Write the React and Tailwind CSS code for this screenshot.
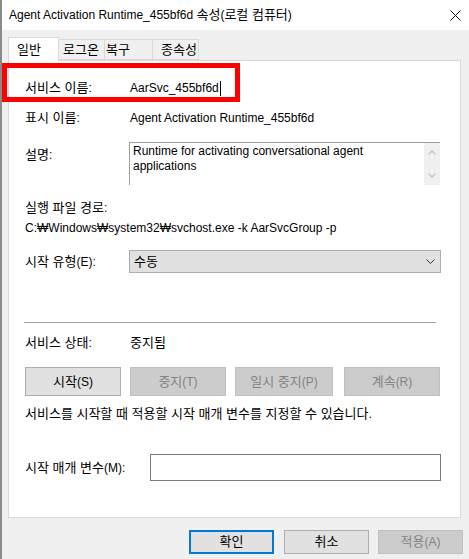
const FONT = { fontFamily: '"Liberation Sans", "Noto Sans CJK KR", sans-serif' };

// Hangul in Noto CJK runs ~8% narrower than Malgun Gothic, so bump those runs up a pixel
function K({ children }) {
  const parts = String(children).split(/([\uAC00-\uD7A3]+(?: [\uAC00-\uD7A3]+)*)/);
  return parts.map((p, i) =>
    /[\uAC00-\uD7A3]/.test(p) ? (
      <span key={i} className="text-[13px]">
        {p}
      </span>
    ) : (
      p
    )
  );
}

function Btn({ children, disabled, className = '' }) {
  return (
    <div
      className={`flex items-center justify-center border ${
        disabled ? 'border-[#bfbfbf] bg-[#cccccc] text-[#838383]' : 'border-[#adadad] bg-[#e1e1e1] text-black'
      } ${className}`}
    >
      <span>
        <K>{children}</K>
      </span>
    </div>
  );
}

function Row({ label, children, className = '' }) {
  return (
    <div className={`flex h-[20px] items-center ${className}`}>
      <div className="w-[105px] shrink-0">
        <K>{label}</K>
      </div>
      {children}
    </div>
  );
}

export default function App() {
  return (
    <div
      className="relative h-[559px] w-[469px] overflow-hidden border-l-2 border-[#8a8a8a] bg-[#f0f0f0] text-[12px] leading-[16px] text-black"
      style={FONT}
    >
      {/* title bar */}
      <div className="flex h-[30px] items-center justify-between bg-white pl-[7px] pr-[8px]">
        <span>
          <K>Agent Activation Runtime_455bf6d 속성(로컬 컴퓨터)</K>
        </span>
        <svg width="11" height="11" viewBox="0 0 11 11">
          <path d="M0.5 0.5L10.5 10.5M10.5 0.5L0.5 10.5" stroke="#111" strokeWidth="1" />
        </svg>
      </div>

      {/* tabs */}
      <div className="flex h-[30px] items-end pl-[6px]">
        <div className="relative z-10 -mb-px flex h-[24px] w-[51px] items-center border border-b-0 border-[#d9d9d9] bg-white pl-[8px]">
          <K>일반</K>
        </div>
        <div className="flex h-[21px] w-[46px] items-center border-y border-r border-[#d9d9d9] pl-[4px]">
          <K>로그온</K>
        </div>
        <div className="flex h-[21px] w-[48px] items-center border-y border-r border-[#d9d9d9] pl-[1px]">
          <K>복구</K>
        </div>
        <div className="flex h-[21px] w-[46px] items-center border-y border-r border-[#d9d9d9] pl-[8px]">
          <K>종속성</K>
        </div>
      </div>

      {/* panel */}
      <div className="ml-[6px] h-[458px] w-[453px] border border-[#d9d9d9] bg-white pl-[16px]">
        <Row label="서비스 이름:" className="mt-[17px]">
          <span className="flex items-center">
            AarSvc_455bf6d
            <span className="ml-[1px] inline-block h-[15px] w-px bg-black" />
          </span>
        </Row>
        <Row label="표시 이름:" className="mt-[10px]">
          <span>Agent Activation Runtime_455bf6d</span>
        </Row>

        <div className="mt-[14px] flex h-[43px]">
          <div className="w-[104px] shrink-0 pt-[5px]">
            <K>설명:</K>
          </div>
          <div className="flex h-[43px] w-[311px] border-l border-t border-[#a0a0a0]">
            <div className="flex-1 pl-[3px] pt-[1px] leading-[15px]">
              Runtime for activating conversational agent
              <br />
              applications
            </div>
            <div className="flex w-[16px] flex-col items-center justify-between bg-[#f0f0f0] py-[7px]">
              <svg width="8" height="5" viewBox="0 0 8 5">
                <path d="M0.5 4.5L4 1L7.5 4.5" stroke="#c2c2c2" fill="none" strokeWidth="1.2" />
              </svg>
              <svg width="8" height="5" viewBox="0 0 8 5">
                <path d="M0.5 0.5L4 4L7.5 0.5" stroke="#c2c2c2" fill="none" strokeWidth="1.2" />
              </svg>
            </div>
          </div>
        </div>

        <div className="mt-[15px] h-[16px]">
          <K>실행 파일 경로:</K>
        </div>
        <div className="mt-[4px] h-[16px]">C:₩Windows₩system32₩svchost.exe -k AarSvcGroup -p</div>

        <div className="mt-[14px] flex h-[23px] items-center">
          <div className="w-[104px] shrink-0 pt-[1px]">
            <K>시작 유형(E):</K>
          </div>
          <div className="flex h-[23px] w-[312px] items-center justify-between border border-[#adadad] bg-[#e1e1e1] pl-[4px] pr-[5px]">
            <span>
              <K>수동</K>
            </span>
            <svg width="9" height="5" viewBox="0 0 9 5">
              <path d="M0.5 0.5L4.5 4.5L8.5 0.5" stroke="#333" fill="none" strokeWidth="1" />
            </svg>
          </div>
        </div>

        <div className="-ml-px mt-[49px] h-px w-[412px] bg-[#a0a0a0]" />

        <Row label="서비스 상태:" className="mt-[10px]">
          <span>
            <K>중지됨</K>
          </span>
        </Row>

        <div className="mt-[14px] flex h-[29px]">
          <Btn className="w-[96px]">시작(S)</Btn>
          <Btn disabled className="ml-[9px] w-[96px]">중지(T)</Btn>
          <Btn disabled className="ml-[9px] w-[98px]">일시 중지(P)</Btn>
          <Btn disabled className="ml-[11px] w-[96px]">계속(R)</Btn>
        </div>

        <div className="mt-[10px] h-[16px]">
          <K>서비스를 시작할 때 적용할 시작 매개 변수를 지정할 수 있습니다.</K>
        </div>

        <div className="mt-[32px] flex h-[27px] items-center">
          <div className="w-[125px] shrink-0 pt-[1px]">
            <K>시작 매개 변수(M):</K>
          </div>
          <div className="h-[27px] w-[291px] border border-[#7a7a7a] bg-white" />
        </div>
      </div>

      {/* dialog buttons */}
      <div className="mt-[12px] flex h-[24px] pl-[187px]">
        <Btn className="w-[85px] border-2 !border-[#0078d7]">확인</Btn>
        <Btn className="ml-[10px] w-[85px]">취소</Btn>
        <Btn disabled className="ml-[9px] w-[85px]">적용(A)</Btn>
      </div>

      {/* red highlight annotation */}
      <div className="absolute left-0 top-[63px] h-[39px] w-[238px] border-[5px] border-[#ff0000]" />
    </div>
  );
}
